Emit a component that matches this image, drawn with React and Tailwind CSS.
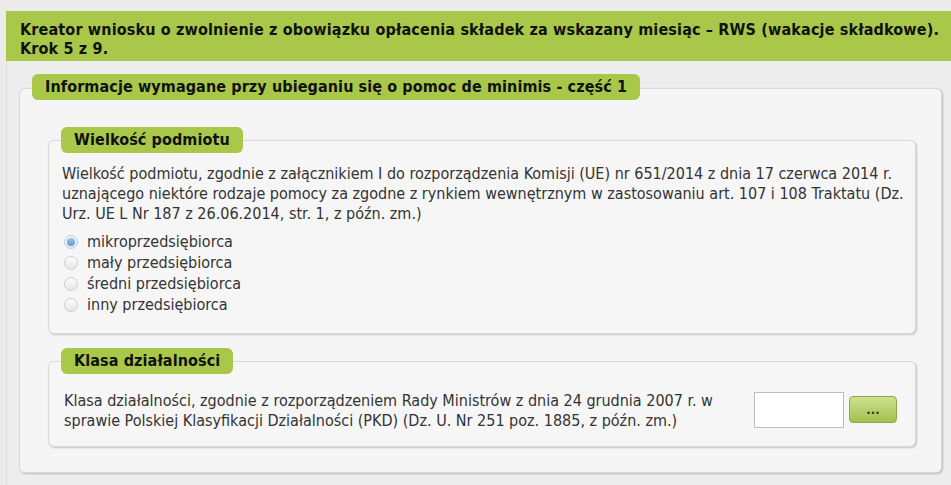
import React from "react";

const font = { fontFamily: '"DejaVu Sans Condensed", "DejaVu Sans", Tahoma, sans-serif' };

function Legend({ children }) {
  return (
    <div className="relative z-10 ml-[13px] flex h-[26px] w-fit items-center rounded-[6px] bg-[#a9c84a] px-[13px] text-[16px] font-bold tracking-[0.1px] text-[#111]">
      {children}
    </div>
  );
}

function Radio({ checked, label }) {
  return (
    <div className="flex h-[21px] items-center">
      <span
        className={
          "ml-[2px] flex h-[14px] w-[14px] items-center justify-center rounded-full border " +
          (checked
            ? "border-[#b9cfe3] bg-gradient-to-b from-[#f4f8fc] to-[#dbe7f2]"
            : "border-[#cfcfcf] bg-gradient-to-b from-[#fdfdfd] to-[#e6e6e6]")
        }
      >
        {checked && <span className="h-[8px] w-[8px] rounded-full bg-gradient-to-b from-[#9cc4e8] to-[#5f9bd0]" />}
      </span>
      <span className="ml-[9px]">{label}</span>
    </div>
  );
}

export default function App() {
  return (
    <div className="h-[485px] w-[951px] overflow-hidden bg-[#ebebeb] pt-[11px] pl-[6px]" style={font}>
      <div className="h-[50px] bg-[#a9c84a] pl-[14px] pt-[9px] text-[16px] font-bold leading-[19px] tracking-[0.15px] text-[#111]">
        <div className="whitespace-nowrap">
          Kreator wniosku o zwolnienie z obowiązku opłacenia składek za wskazany miesiąc – RWS (wakacje składkowe).
        </div>
        <div>Krok 5 z 9.</div>
      </div>
      <div className="h-[430px] border-l border-[#dcdcdc] bg-[#ededed] pl-[12px] pr-[9px] pt-[13px]">
        <Legend>Informacje wymagane przy ubieganiu się o pomoc de minimis - część 1</Legend>
        <div className="-mt-[12px] rounded-[6px] border border-[#dadada] bg-[#f5f5f5] pb-[25px] pl-[28px] pr-[25px] pt-[38px] shadow-[1px_1px_2px_rgba(0,0,0,0.22)]">
          <Legend>Wielkość podmiotu</Legend>
          <div className="-mt-[13px] rounded-[6px] border border-[#d8d8d8] bg-[#f6f6f6] pb-[18px] pl-[13px] pt-[23px] text-[16px] leading-[20px] text-[#333] shadow-[1px_1px_2px_rgba(0,0,0,0.2)]">
            <div className="whitespace-nowrap">
              Wielkość podmiotu, zgodnie z załącznikiem I do rozporządzenia Komisji (UE) nr 651/2014 z dnia 17 czerwca 2014 r.
              <br />
              uznającego niektóre rodzaje pomocy za zgodne z rynkiem wewnętrznym w zastosowaniu art. 107 i 108 Traktatu (Dz.
              <br />
              Urz. UE L Nr 187 z 26.06.2014, str. 1, z późn. zm.)
            </div>
            <div className="mt-[7px]">
              <Radio checked label="mikroprzedsiębiorca" />
              <Radio label="mały przedsiębiorca" />
              <Radio label="średni przedsiębiorca" />
              <Radio label="inny przedsiębiorca" />
            </div>
          </div>
          <div className="mt-[14px]">
            <Legend>Klasa działalności</Legend>
            <div className="-mt-[13px] flex items-center rounded-[6px] border border-[#d8d8d8] bg-[#f6f6f6] pb-[15px] pl-[15px] pr-[18px] pt-[29px] text-[16px] leading-[20px] text-[#333] shadow-[1px_1px_2px_rgba(0,0,0,0.2)]">
              <div className="whitespace-nowrap">
                Klasa działalności, zgodnie z rozporządzeniem Rady Ministrów z dnia 24 grudnia 2007 r. w
                <br />
                sprawie Polskiej Klasyfikacji Działalności (PKD) (Dz. U. Nr 251 poz. 1885, z późn. zm.)
              </div>
              <div className="ml-auto flex items-center">
                <div className="-mt-[2px] h-[36px] w-[90px] border border-[#bdbdbd] bg-white" />
                <button className="ml-[5px] -mt-[3px] flex h-[27px] w-[48px] items-center justify-center rounded-[4px] border border-[#8fa94a] bg-gradient-to-b from-[#cde08f] to-[#a3c24c] text-[13px] font-bold leading-none text-[#333]">
                  ...
                </button>
              </div>
            </div>
          </div>
        </div>
      </div>
    </div>
  );
}
